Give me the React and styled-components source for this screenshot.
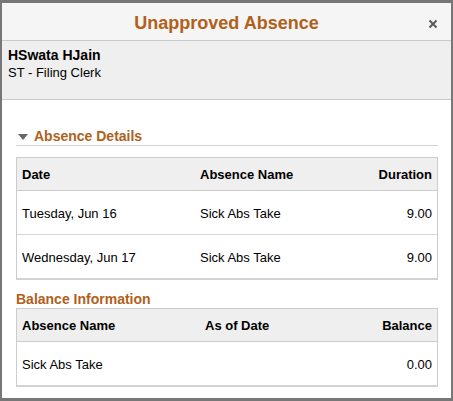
import React from "react";
import styled, { createGlobalStyle } from "styled-components";

const ORANGE = "#b1601b";

const GlobalStyle = createGlobalStyle`
  html, body {
    margin: 0;
    padding: 0;
    background: #777777;
  }
  body {
    font-family: "Liberation Sans", Arial, sans-serif;
    color: #000;
  }
`;

const details = [
  { date: "Tuesday, Jun 16", name: "Sick Abs Take", duration: "9.00" },
  { date: "Wednesday, Jun 17", name: "Sick Abs Take", duration: "9.00" },
];

const balances = [{ name: "Sick Abs Take", asOf: "", balance: "0.00" }];

const App = () => {
  return (
    <Backdrop>
      <GlobalStyle />
      <Modal>
        <Header>
          <span />
          <Title>Unapproved Absence</Title>
          <CloseButton aria-label="Close">
            <svg width="10" height="10" viewBox="0 0 10 10">
              <path
                d="M1.5 1.5 L8.5 8.5 M8.5 1.5 L1.5 8.5"
                stroke="#5a5a5a"
                strokeWidth="2"
              />
            </svg>
          </CloseButton>
        </Header>
        <Employee>
          <Name>HSwata HJain</Name>
          <Job>ST - Filing Clerk</Job>
        </Employee>
        <Content>
          <SectionTitle underline>
            <Caret />
            Absence Details
          </SectionTitle>
          <Table>
            <HeadRow cols="178px 1fr auto">
              <span>Date</span>
              <span>Absence Name</span>
              <Right>Duration</Right>
            </HeadRow>
            {details.map((d, i) => (
              <Row key={i} cols="178px 1fr auto" last={i === details.length - 1}>
                <span>{d.date}</span>
                <span>{d.name}</span>
                <Right>{d.duration}</Right>
              </Row>
            ))}
          </Table>
          <SectionTitle small>Balance Information</SectionTitle>
          <Table>
            <HeadRow cols="183px 1fr auto">
              <span>Absence Name</span>
              <span>As of Date</span>
              <Right>Balance</Right>
            </HeadRow>
            {balances.map((b, i) => (
              <Row key={i} cols="183px 1fr auto" last={i === balances.length - 1}>
                <span>{b.name}</span>
                <span>{b.asOf}</span>
                <Right>{b.balance}</Right>
              </Row>
            ))}
          </Table>
        </Content>
      </Modal>
    </Backdrop>
  );
};

const Backdrop = styled.div`
  width: 453px;
  height: 401px;
  padding: 3px 2px 3px 2px;
  box-sizing: border-box;
  overflow: hidden;
`;

const Modal = styled.div`
  height: 395px;
  background: #ffffff;
  display: flex;
  flex-direction: column;
`;

const Header = styled.div`
  display: grid;
  grid-template-columns: 1fr auto 1fr;
  align-items: center;
  height: 37px;
  background: #f5f5f5;
  border-bottom: 1px solid #c9c9c9;
`;

const Title = styled.h1`
  margin: 0;
  font-size: 18px;
  font-weight: bold;
  color: ${ORANGE};
  line-height: 22px;
  padding-top: 2px;
`;

const CloseButton = styled.button`
  justify-self: end;
  margin-right: 13px;
  margin-top: 4px;
  border: 0;
  padding: 0;
  background: none;
  display: flex;
  cursor: pointer;
`;

const Employee = styled.div`
  height: 59px;
  background: #efefef;
  border-bottom: 1px solid #c9c9c9;
  padding: 6px 6px 0;
  box-sizing: border-box;
`;

const Name = styled.div`
  font-size: 14px;
  font-weight: bold;
  line-height: 17px;
`;

const Job = styled.div`
  font-size: 13px;
  line-height: 17px;
`;

const Content = styled.div`
  padding: 0 13px 0 14px;
`;

const SectionTitle = styled.h2`
  display: flex;
  align-items: center;
  margin: ${(p) => (p.small ? "10px 0 0" : "27px 0 11px")};
  font-size: 14px;
  font-weight: bold;
  line-height: 18px;
  color: ${ORANGE};
  border-bottom: ${(p) => (p.underline ? "1px solid #d3d3d3" : "none")};
`;

const Caret = styled.span`
  width: 0;
  height: 0;
  border-left: 5px solid transparent;
  border-right: 5px solid transparent;
  border-top: 6px solid #666666;
  margin: 1px 6px 0 2px;
`;

const Table = styled.div`
  border: 1px solid #cccccc;
  border-bottom: 2px solid #d2d2d2;
  font-size: 13px;
`;

const HeadRow = styled.div`
  display: grid;
  grid-template-columns: ${(p) => p.cols};
  align-items: center;
  height: 31px;
  padding: 1px 5px 0;
  background: #efefef;
  border-bottom: 1px solid #cccccc;
  font-weight: bold;
`;

const Row = styled.div`
  display: grid;
  grid-template-columns: ${(p) => p.cols};
  align-items: center;
  height: 42px;
  padding: 1px 5px 0;
  border-bottom: ${(p) => (p.last ? "none" : "1px solid #d6d6d6")};
`;

const Right = styled.span`
  text-align: right;
`;

export default App;
